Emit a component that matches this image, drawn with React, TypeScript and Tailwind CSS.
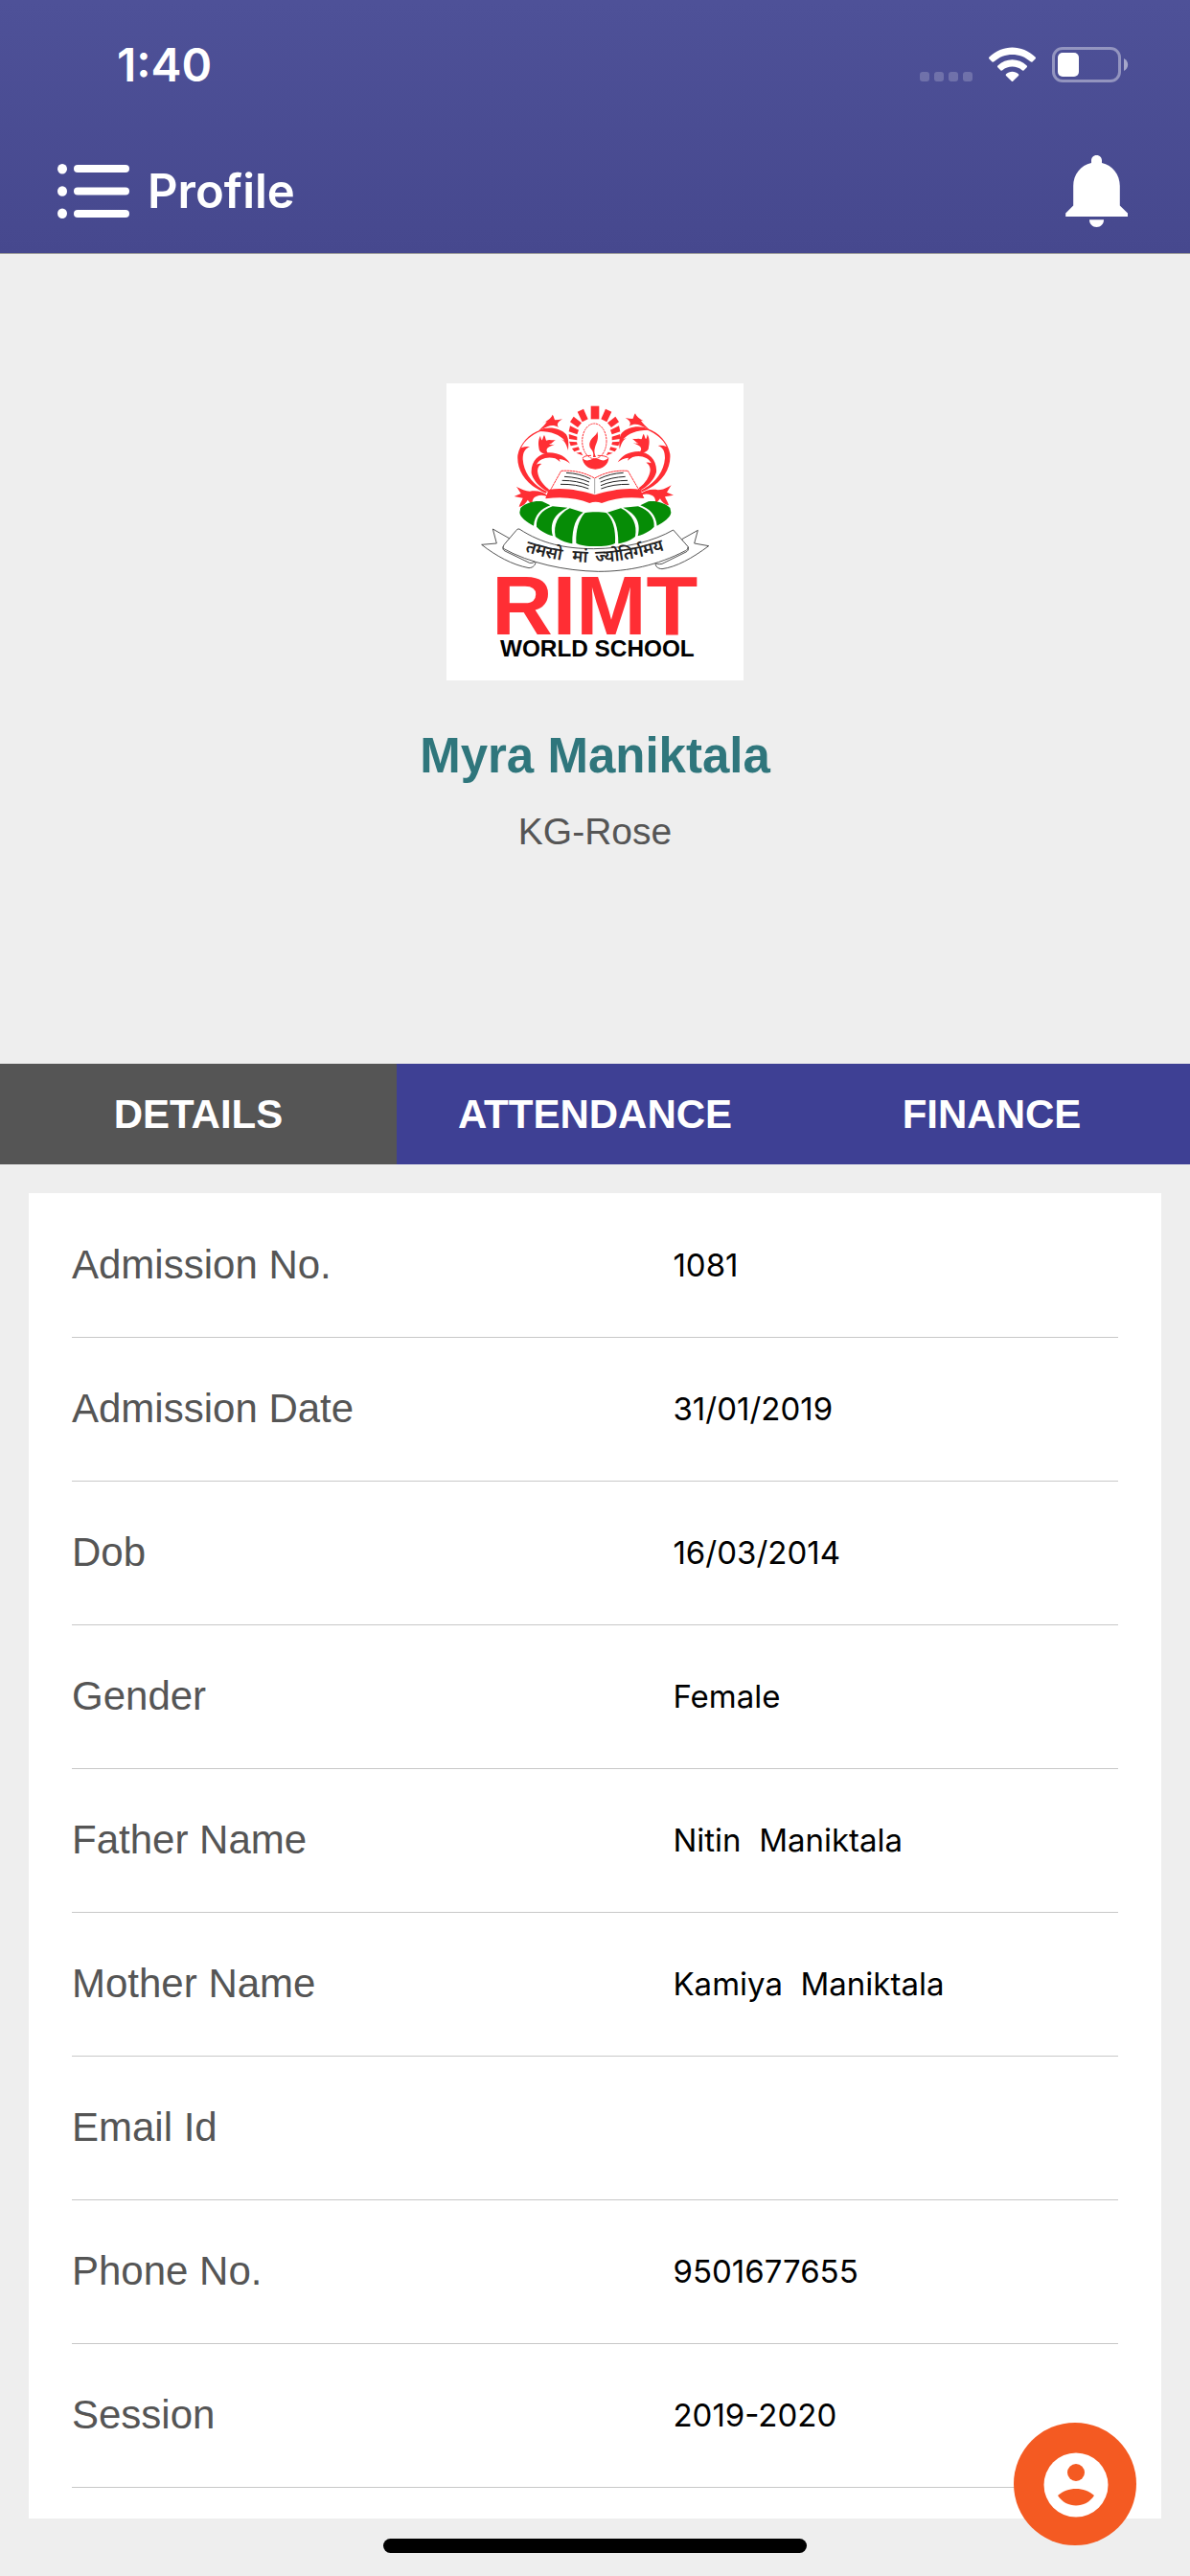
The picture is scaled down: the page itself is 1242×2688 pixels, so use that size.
import React, { useState } from "react"

const details = [
  { label: "Admission No.", value: "1081" },
  { label: "Admission Date", value: "31/01/2019" },
  { label: "Dob", value: "16/03/2014" },
  { label: "Gender", value: "Female" },
  { label: "Father Name", value: "Nitin  Maniktala" },
  { label: "Mother Name", value: "Kamiya  Maniktala" },
  { label: "Email Id", value: "" },
  { label: "Phone No.", value: "9501677655" },
  { label: "Session", value: "2019-2020" },
]

const tabs = ["DETAILS", "ATTENDANCE", "FINANCE"]

function StatusBar() {
  return (
    <div className="flex h-[136px] items-center justify-between pl-[122px] pr-[64px]">
      <span className="text-[48px] leading-[56px] font-semibold">1:40</span>
      <svg className="h-[38px] w-[218px]" viewBox="960 49 218 38" fill="#fff">
        <g opacity="0.2">
          <rect x="960" y="75" width="10" height="10" rx="3" />
          <rect x="975" y="75" width="10" height="10" rx="3" />
          <rect x="990" y="75" width="10" height="10" rx="3" />
          <rect x="1005" y="75" width="10" height="10" rx="3" />
        </g>
        <path d="M1032.5 59.500C1046 46 1067 46 1080.500 59.500Q1081.500 60.500 1080.500 61.500L1077.500 64.500Q1076.500 65 1075.500 64.300C1065 54.500 1048 54.500 1037.500 64.300Q1036.500 65 1035.500 64.500L1032.500 61.500Q1031.500 60.500 1032.500 59.500Z" />
        <path d="M1041.300 68.500C1050 60 1063 60 1071.700 68.500Q1072.500 69.500 1071.700 70.300L1068.500 73.500Q1067.500 74 1066.700 73.300C1061 68.300 1052 68.300 1046.300 73.300Q1045.500 74 1044.500 73.500L1041.300 70.300Q1040.500 69.500 1041.300 68.500Z" />
        <path d="M1050 77.300C1053.500 73.800 1059.500 73.800 1063 77.300Q1063.800 78.200 1063 79L1057.200 84.700Q1056.500 85.300 1055.800 84.700L1050 79Q1049.200 78.200 1050 77.300Z" />
        <rect x="1099.500" y="50.500" width="69" height="34" rx="9.500" fill="none" stroke="#fff" strokeOpacity="0.4" strokeWidth="3" />
        <rect x="1104" y="55" width="22" height="25" rx="5" />
        <path d="M1173 61C1178.500 63.500 1178.500 71.500 1173 74Z" opacity="0.5" />
      </svg>
    </div>
  )
}

function Header() {
  return (
    <header className="border-b border-[#999] bg-linear-to-b from-[#4e5198] to-[#46488e] font-[Inter,sans-serif] text-white">
      <StatusBar />
      <div className="flex h-32 items-center justify-between pr-[64px] pb-px pl-[60px]">
        <div className="flex items-center gap-[18px]">
          <button type="button" aria-label="Menu">
            <svg className="h-[58px] w-[76px]" viewBox="60 170 76 58" fill="#fff">
              <ellipse cx="65" cy="175.300" rx="5" ry="5.300" />
              <ellipse cx="65" cy="198.500" rx="5" ry="5.300" />
              <ellipse cx="65" cy="221.700" rx="5" ry="5.300" />
              <rect x="77" y="171" width="58" height="8" rx="4" />
              <rect x="77" y="194.500" width="58" height="8" rx="4" />
              <rect x="77" y="218" width="58" height="8" rx="4" />
            </svg>
          </button>
          <h1 className="text-[49px] leading-[60px] font-semibold">Profile</h1>
        </div>
        <button type="button" aria-label="Notifications">
          <svg className="h-[76px] w-[66px]" viewBox="1112 161 66 76" fill="#fff">
            <path d="M1144.500 161C1148 161 1150 163.500 1150 166.500V169C1161 171.500 1168.800 181 1168.800 193V213.500L1177 221.500V225H1112.200V221.500L1120.200 213.500V193C1120.200 181 1128 171.500 1139 169V166.500C1139 163.500 1141 161 1144.500 161Z" />
            <path d="M1137 228.300H1152C1152 233 1148.700 236 1144.500 236C1140.300 236 1137 233 1137 228.300Z" />
          </svg>
        </button>
      </div>
    </header>
  )
}

// left half of the scroll work, drawn again mirrored for the right
function Scrolls() {
  return (
    <g fill="#ff2e34">
      <path d="M318 179C329 168 338 160 344 151Q338 150 331 154C344 148 356 142 362 128C367 134 367 142 370 145Q380 145 393 142C380 150 373 158 381 168C368 160 357 161 347 165C335 170 328 174 318 179Z" />
      <path d="M320 177C345 164 385 168 405 190C414 205 412 225 411 240C406 224 402 212 389 205L400 209C384 192 360 180 320 180Z" />
      <path d="M324 176C288 188 260 218 253 255C249 305 282 350 341 374L345 369C302 350 272 312 269 268C269 246 276 234 291 229Q280 226 264 232C275 208 296 192 324 180Z" />
      <path d="M321 240C318 225 315 210 324 194Q325 203 328 208C331 208 332 198 336 192C341 201 340 207 343 209C352 204 362 210 372 207C362 213 361 219 351 221Q360 223 369 221C358 226 350 228 345 234C342 240 344 244 348 249C336 252 327 250 321 240Z" />
      <path d="M417 281C405 262 385 247 350 247C318 250 293 275 296 312C302 335 323 357 347 369L351 362C330 347 316 325 315 304C316 293 320 286 328 282Q320 280 312 284C320 267 345 257 370 265Q377 269 386 276L383 267C396 267 408 274 417 281Z" />
      <path d="M347 382C332 368 310 364 291 368C278 368 262 361 249 353C254 360 258 368 263 375L242 384L269 389C266 398 260 405 257 416C272 414 279 404 284 395L299 412C297 400 300 388 311 384C325 378 337 380 345 386Z" />
    </g>
  )
}

function Rays() {
  return (
    <g fill="#ff2e34">
      <path d="M440 119L459 110L473 142L455 151Z" />
      <path d="M428 134L453 154L441 168L417 151Z" />
      <path d="M417 163L444 176L439 190L413 181Z" />
      <path d="M413 189L439 197L439 208L414 204Z" />
      <path d="M414 212L438 214L440 222L419 226Z" />
      <path d="M423 234L443 229L447 238L430 244Z" />
      <path d="M436 248L451 245L457 256Z" />
    </g>
  )
}

function Petals() {
  return (
    <g fill="#068c06">
      <path d="M262 420C280 403 307 397 330 400L355 412C326 423 306 442 303 476C283 465 259 448 259 434Z" />
      <path d="M362 415L409 419C378 434 350 458 363 508C340 501 321 490 312 479C310 450 327 428 362 415Z" />
      <path d="M416 421L458 434C437 448 423 478 424 532C401 527 380 519 371 509C364 475 378 440 416 421Z" />
    </g>
  )
}

function PageLines() {
  return (
    <g fill="none" stroke="#222" strokeWidth="3">
      <path d="M405 310Q447 312 481 329" />
      <path d="M399 322Q443 324 477 339" />
      <path d="M392 334Q440 334 476 350" />
      <path d="M387 346Q437 345 475 360" />
    </g>
  )
}

function SchoolLogo() {
  return (
    <svg className="size-[310px] bg-white" viewBox="30 30 930 930" role="img" aria-label="RIMT World School">
      <Scrolls />
      <g transform="translate(983 -4) scale(-1 1)">
        <Scrolls />
      </g>
      <path d="M482 101H508V142H482Z" fill="#ff2e34" />
      <Rays />
      <g transform="translate(987 0) scale(-1 1)">
        <Rays />
      </g>
      <ellipse cx="493" cy="211" rx="38" ry="55" fill="none" stroke="#ff2e34" strokeWidth="3" strokeDasharray="7 2" />
      <path d="M502 181C508 203 500 216 495 230C491 243 494 252 498 261H489C492 250 488 242 482 235C472 220 482 205 490 198C497 192 501 188 502 181Z" fill="#ff2e34" />
      <path d="M457 264Q460 256 483 256M503 256Q530 256 536 264" fill="none" stroke="#ff2e34" strokeWidth="3" />
      <path d="M455 262C461 274 475 273 484 268C492 264 500 264 508 268C517 273 530 273 538 262C538 285 518 299 496 299C474 299 457 285 455 262Z" fill="#ff2e34" />

      <path d="M341 390L389 304C425 302 458 307 494 327C530 307 563 302 598 304L648 390L495 404Z" fill="#fff" />
      <path d="M341 390L389 304C425 302 458 307 494 327C530 307 563 302 598 304L648 390" fill="none" stroke="#ff2e34" strokeWidth="3" strokeDasharray="8 1" />
      <PageLines />
      <g transform="translate(989 0) scale(-1 1)">
        <PageLines />
      </g>
      <path d="M494 328V376" stroke="#777" strokeWidth="2" />
      <path d="M349 363C400 355 450 366 495 379C540 366 592 355 638 363L648 390C600 384 555 389 516 405Q497 397 478 405C440 390 395 384 341 391Z" fill="#ff2e34" />

      <Petals />
      <g transform="translate(992 0) scale(-1 1)">
        <Petals />
      </g>
      <path d="M463 436C480 432 515 432 531 436C550 455 560 485 558 530C545 538 520 540 497 540C470 540 445 537 436 530C434 490 445 455 463 436Z" fill="#068c06" />

      <g fill="#fff" stroke="#333" strokeWidth="2.500" strokeLinejoin="round">
        <path d="M228 516L175 486L187 531L140 535C185 570 235 598 288 608C303 607 308 598 311 585L215 535Z" />
        <path d="M767 518L817 490L806 531L851 539C800 577 750 605 705 611C690 610 685 603 684 593L775 545Z" />
        <path d="M208 540C205 549 208 552 213 555L290 592C300 594 306 590 311 583" />
        <path d="M787 542C789 552 785 555 780 558L705 595C693 597 686 596 684 590" />
        <path d="M258 486C330 533 400 547 490 548C590 547 680 524 740 489L786 541C786 549 783 552 778 554C690 600 600 619 505 619C400 617 290 593 208 547C206 542 209 537 212 533L248 491Q252 484 258 486Z" />
      </g>
      <path id="motto" d="M275 556Q500 632 740 542" fill="none" />
      <text fontSize="53" fontWeight="600" fill="#222" className="font-['Noto_Sans_Devanagari','Noto_Sans',sans-serif]">
        <textPath href="#motto">तमसो</textPath>
        <textPath href="#motto" startOffset="152">मां</textPath>
        <textPath href="#motto" startOffset="225">ज्योतिर्गमय</textPath>
      </text>

      <g fontWeight="700" textAnchor="middle" className="font-['Liberation_Sans',Arial,sans-serif]">
        <text x="494" y="815" fontSize="264" fill="#ff2e34">RIMT</text>
        <text x="502" y="885" fontSize="73" fill="#000">WORLD SCHOOL</text>
      </g>
    </svg>
  )
}

function ProfileCard() {
  return (
    <section className="flex flex-col items-center pt-[135px] pb-[218px]">
      <SchoolLogo />
      <h2 className="mt-12 text-[51px] leading-[62px] font-bold text-[#2f767c]">Myra Maniktala</h2>
      <p className="mt-6 text-[39px] leading-[48px] text-[#555]">KG-Rose</p>
    </section>
  )
}

function DetailsTable() {
  return (
    <div className="mx-[30px] mt-[30px] bg-white px-[45px] pb-8">
      <table className="w-full table-fixed">
        <tbody>
          {details.map((item) => (
            <tr key={item.label} className="h-[150px] border-b border-[#c8c8c8]">
              <th scope="row" className="w-[57%] text-left text-[42px] leading-[48px] font-normal text-[#555]">
                {item.label}
              </th>
              <td className="pl-[5px] font-[Inter,sans-serif] text-[33px] leading-[48px] whitespace-pre text-black">{item.value}</td>
            </tr>
          ))}
        </tbody>
      </table>
    </div>
  )
}

function App() {
  const [active, setActive] = useState("DETAILS")

  return (
    <div className="relative flex min-h-screen flex-col bg-[#eee] font-['Liberation_Sans',Arial,sans-serif]">
      <Header />
      <main>
        <ProfileCard />
        <div role="tablist" className="grid grid-cols-3">
          {tabs.map((tab) => (
            <button
              key={tab}
              type="button"
              role="tab"
              aria-selected={active === tab}
              onClick={() => setActive(tab)}
              className={`h-[105px] text-[42px] leading-[48px] font-bold text-white ${active === tab ? "bg-[#555]" : "bg-[#3e4094]"}`}
            >
              {tab}
            </button>
          ))}
        </div>
        <DetailsTable />
      </main>
      <div className="mt-auto flex h-[60px] items-center justify-center pb-1">
        <div className="h-[15px] w-[442px] rounded-full bg-black" />
      </div>

      {/* floating account button */}
      <button type="button" aria-label="Account" className="absolute right-14 bottom-8 size-32 rounded-full bg-[#f45a22]">
        <svg className="size-full" viewBox="0 0 128 128">
          <circle cx="65" cy="65" r="33.500" fill="#fff" />
          <circle cx="65" cy="52" r="9" fill="#f45a22" />
          <path d="M46 76C56 66.500 74 66.500 84 76C75 90 55 90 46 76Z" fill="#f45a22" />
        </svg>
      </button>
    </div>
  )
}

export default App
